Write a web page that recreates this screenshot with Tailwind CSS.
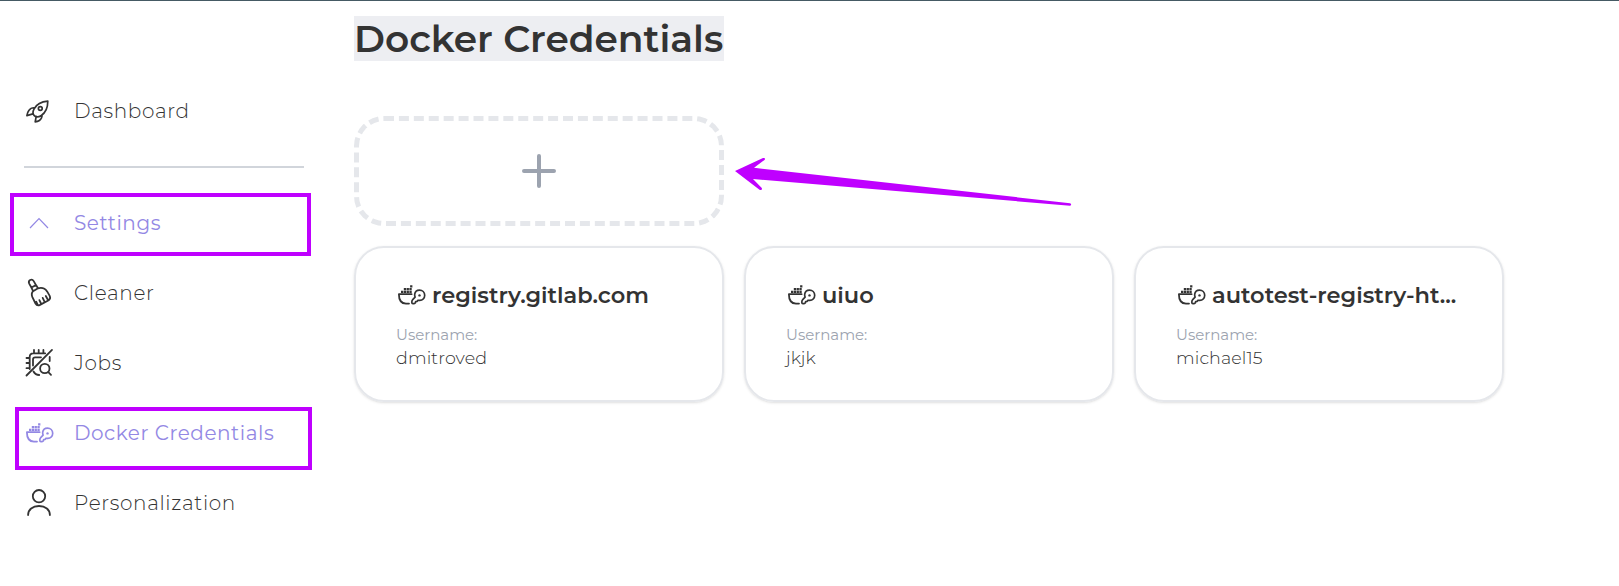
<!DOCTYPE html>
<html lang="en">
<head>
<meta charset="utf-8">
<title>Docker Credentials</title>
<script src="https://cdn.jsdelivr.net/npm/@tailwindcss/browser@4"></script>
</head>
<body class="relative h-[586px] overflow-hidden border-t border-[#455a64] bg-white font-['Montserrat','Inter',sans-serif] text-[#333]">
<svg class="hidden">
  <symbol id="docker-key" viewBox="0 0 28 20">
    <path d="M13.6 9.2H.9C.9 15 3.4 18.6 8 18.6h3" fill="none" stroke="currentColor" stroke-width="1.8" stroke-linecap="round" stroke-linejoin="round"/>
    <path d="M3 5.8h2.3v2.3H3zM5.8 5.8h2.3v2.3H5.8zM8.6 5.8h2.3v2.3H8.6zM11.4 5.8h2.3v2.3h-2.3zM5.8 3h2.3v2.3H5.8zM8.6 3h2.3v2.3H8.6zM11.4 3h2.3v2.3h-2.3zM12.1.3h2.3v2.2h-2.3z" fill="currentColor"/>
    <path d="M16.7 9.2c.4-2.7 2.4-4.1 4.8-4.1 2.9 0 5.2 2.2 5.2 5.1s-2.2 5-4.9 5.1h-1.9l-.7 1-1.5.2-.3 1.3c-.5.7-1.4 1-2.4.9-.9-.1-1.2-.7-1.2-1.5 0-1.200.1-1.800.9-2.600l2.400-2.500c-.4-.9-.5-1.900-.4-2.900z" fill="none" stroke="currentColor" stroke-width="1.7" stroke-linejoin="round"/>
    <circle cx="21.5" cy="10.4" r="1.2" fill="currentColor"/>
  </symbol>
</svg>

<div class="flex">
  <nav class="w-[328px] shrink-0 pl-6 pt-[75px] text-[20px] font-light tracking-[0.66px]">
    <a class="flex h-[70px] items-center">
      <svg class="ml-px h-7 w-7" viewBox="0 0 28 28" fill="none" stroke="currentColor" stroke-width="1.7" stroke-linejoin="round" stroke-linecap="round"><path d="M22.8 4.1c-6.200.5-11.300 3.200-13.700 7.700-1.300 2.400-1.600 5 .2 6.800s4.700 1.300 7-.1c4.300-2.700 6.500-8 6.500-14.400zM9.600 10.800c-2.600-.2-4.400.7-5.600 2.500-1.200 1.600-1.900 3.600-2.100 5.300l5.900-1.700M17 17.900c.2 2.600-.9 4.300-2.600 5.600-1.200.9-2.600 1.300-4.200 1.300l1-5.400"/><circle cx="15.3" cy="11.5" r="1.9"/></svg>
      <span class="ml-[21px]">Dashboard</span>
    </a>
    <div class="mt-5 h-0.5 w-[280px] bg-[#d1d5db]"></div>
    <a class="mt-5 flex h-[70px] items-center font-normal tracking-[0.53px] text-[#9388e4]">
      <svg class="ml-px h-7 w-7" viewBox="0 0 28 28" fill="none" stroke="currentColor" stroke-width="1.2"><path d="M5 19l9-9.500 9 9.500"/></svg>
      <span class="ml-[21px]">Settings</span>
    </a>
    <a class="flex h-[70px] items-center">
      <svg class="ml-px h-7 w-7 overflow-visible" viewBox="0 0 28 28" fill="none" stroke="currentColor" stroke-width="1.8" stroke-linejoin="round" stroke-linecap="round"><path d="M6.4 8.500L4.200 4.600c-.8-1.800-.1-3 1-3.600 1.300-.7 2.700-.2 3.500 1.100l2.300 4zM6.400 8.500l4.600-2.400 2 3.200-4.900 2.900zM8.100 12.200c-1.500 1.500-1.700 3.600-.7 6l3.100 6.300c1 1.800 2.700 2.300 4.500 1.400l8.700-4.700c1.500-1 1.800-2.600 1-4.300l-2.600-4.500c-1.800-2.800-5.300-4-9.100-3.100M12.500 25.500l-1.300-2.800M16 24.500l-1.600-3.400M19.600 22.800l-1.900-3.900M23 21l-2.200-4"/></svg>
      <span class="ml-[21px]">Cleaner</span>
    </a>
    <a class="flex h-[70px] items-center">
      <svg class="ml-px h-7 w-7 overflow-visible" viewBox="0 0 28 28" fill="none" stroke="currentColor" stroke-width="1.8" stroke-linecap="round" stroke-linejoin="round"><path d="M1.5 26.500L27 .9M4.700 20V8c0-2.300 1.300-3.700 3.500-3.700h12M9 4V1M13.700 4V1M18.400 4V1M4.500 9h-3M4.500 14h-3M4.500 19.200h-3M8 16.500v-6c0-1.400.8-2.200 2.200-2.200H16M24.700 8v4M8.500 22.500c1.200 2.200 3.300 3.500 5.700 3.500M23.300 23.200l2.700 2.700"/><circle cx="19.8" cy="19.5" r="4.7"/></svg>
      <span class="ml-[21px]">Jobs</span>
    </a>
    <a class="flex h-[70px] items-center font-normal tracking-[0.53px] text-[#9388e4]">
      <svg class="ml-0.5 h-5 w-7"><use href="#docker-key"/></svg>
      <span class="ml-5">Docker Credentials</span>
    </a>
    <a class="flex h-[70px] items-center">
      <svg class="ml-px h-7 w-7" viewBox="0 0 28 28" fill="none" stroke="currentColor" stroke-width="1.8" stroke-linecap="round"><circle cx="14" cy="7.2" r="6.2"/><path d="M3.1 26c0-5.500 4.500-9 10.900-9s10.900 3.500 10.900 9"/></svg>
      <span class="ml-[21px]">Personalization</span>
    </a>
  </nav>

  <main class="ml-[26px] w-[1150px] pt-[15px]">
    <h1 class="flex h-[45px] w-[370px] items-center whitespace-nowrap bg-[#edeef2] pt-px text-[37.5px] font-semibold">Docker Credentials</h1>
    <div class="mt-[55px] grid grid-cols-3 gap-5">
      <button class="flex h-[110px] items-center justify-center rounded-[30px] border-[5px] border-dashed border-[#e5e7eb]">
        <svg class="h-[34px] w-[34px] text-[#9ca3af]" viewBox="0 0 34 34" stroke="currentColor" stroke-width="4" stroke-linecap="round"><path d="M17 2v30M2 17h30"/></svg>
      </button>
      <section class="col-start-1 h-[156px] rounded-[30px] border-2 border-[#e5e7eb] px-10 pt-[29px] shadow-sm">
        <h2 class="flex h-9 items-center text-[22.5px] font-semibold"><svg class="ml-0.5 h-5 w-7"><use href="#docker-key"/></svg><span class="ml-1.5 pt-px">registry.gitlab.com</span></h2>
        <p class="mt-3 text-[15px] leading-5 text-[#9ca3af]">Username:</p>
        <p class="text-[17.5px] font-light leading-[26px] tracking-[0.1px]">dmitroved</p>
      </section>
      <section class="h-[156px] rounded-[30px] border-2 border-[#e5e7eb] px-10 pt-[29px] shadow-sm">
        <h2 class="flex h-9 items-center text-[22.5px] font-semibold"><svg class="ml-0.5 h-5 w-7"><use href="#docker-key"/></svg><span class="ml-1.5 pt-px">uiuo</span></h2>
        <p class="mt-3 text-[15px] leading-5 text-[#9ca3af]">Username:</p>
        <p class="text-[17.5px] font-light leading-[26px] tracking-[0.1px]">jkjk</p>
      </section>
      <section class="h-[156px] rounded-[30px] border-2 border-[#e5e7eb] px-10 pt-[29px] shadow-sm">
        <h2 class="flex h-9 items-center text-[22.5px] font-semibold"><svg class="ml-0.5 h-5 w-7"><use href="#docker-key"/></svg><span class="ml-1.5 pt-px">autotest-registry-ht...</span></h2>
        <p class="mt-3 text-[15px] leading-5 text-[#9ca3af]">Username:</p>
        <p class="text-[17.5px] font-light leading-[26px] tracking-[0.1px]">michael15</p>
      </section>
    </div>
  </main>
</div>

<div class="absolute left-[10px] top-[192px] h-[63px] w-[301px] border-4 border-[#bf00ff]"></div>
<div class="absolute left-[15px] top-[406px] h-[63px] w-[297px] border-4 border-[#bf00ff]"></div>
<svg class="absolute left-[720px] top-[139px] h-20 w-[370px]" viewBox="0 0 370 80"><path d="M15 31L43 18c2-.5 2.500 1 1.500 2L34 27.800 350 63.200c1.500.5 1.500 2.300 0 2.500L33 39l8.800 9c.7 1.500-.8 2.700-2.300 1.700z" fill="#bf00ff"/></svg>
</body>
</html>
